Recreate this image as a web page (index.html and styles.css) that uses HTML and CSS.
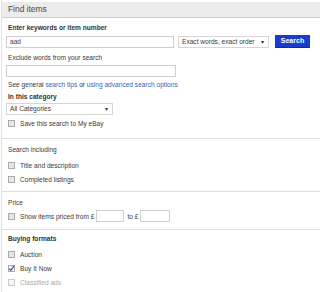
FILE: index.html
```html
<!DOCTYPE html>
<html>
<head>
<meta charset="utf-8">
<link rel="stylesheet" href="styles.css">
</head>
<body>
<div class="panel">
  <div class="head">Find items</div>
  <div class="sec first">
    <div class="lbl bold">Enter keywords or item number</div>
    <div class="row kw">
      <div class="inp wide">aad</div>
      <div class="sel mode">Exact words, exact order<span class="arr">&#9662;</span></div>
      <div class="btn">Search</div>
    </div>
    <div class="lbl">Exclude words from your search</div>
    <div class="inp wide2"></div>
    <div class="links">See general <span class="lnk">search tips</span> or <span class="lnk">using advanced search options</span></div>
    <div class="lbl bold">In this category</div>
    <div class="sel cat">All Categories<span class="arr">&#9662;</span></div>
    <div class="chk"><span class="box"></span>Save this search to My eBay</div>
  </div>
  <div class="sec incl">
    <div class="lbl">Search including</div>
    <div class="chk"><span class="box"></span>Title and description</div>
    <div class="chk"><span class="box"></span>Completed listings</div>
  </div>
  <div class="sec pricesec">
    <div class="lbl">Price</div>
    <div class="chk price"><span class="box"></span>Show items priced from £ <span class="inp small"></span> to £ <span class="inp small2"></span></div>
  </div>
  <div class="sec last">
    <div class="lbl bold">Buying formats</div>
    <div class="chk"><span class="box"></span>Auction</div>
    <div class="chk"><span class="box on"><svg width="7" height="7" viewBox="0 0 7 7"><path d="M1.2 3.6 L2.8 5.3 L5.9 1.2" fill="none" stroke="#2a4f8f" stroke-width="1.2"/></svg></span>Buy It Now</div>
    <div class="chk dis"><span class="box"></span>Classified ads</div>
  </div>
</div>
</body>
</html>
```
FILE: styles.css
```css
html, body { margin: 0; padding: 0; background: #fff; }
body {
  font-family: "Liberation Sans", Arial, sans-serif;
  font-size: 6.6px;
  color: #3a3a3a;
  width: 320px;
  height: 292px;
  overflow: hidden;
}
.panel {
  border-left: 1px solid #e2e2e2;
  margin-left: 1px;
  padding-top: 2px;
  height: 290px;
}
.head {
  height: 15px;
  line-height: 15px;
  background: #ececec;
  border-bottom: 1px solid #cfcfcf;
  font-size: 8.4px;
  color: #444;
  padding-left: 6px;
}
.sec {
  padding: 0 0 0 4px;
  border-bottom: 1px solid #dedede;
}
.sec.first { padding-top: 4px; padding-bottom: 8px; }
.sec.incl { padding-bottom: 5px; }
.sec.pricesec { padding-bottom: 6px; }
.sec.last { border-bottom: none; }
.lbl { line-height: 12px; height: 12px; padding-left: 2px; }
.bold { font-weight: bold; color: #333; }
.row { display: flex; align-items: center; }
.kw { margin-top: 1px; margin-bottom: 4px; }
.inp {
  box-sizing: border-box;
  border: 1px solid #cfcfcf;
  background: #fff;
  height: 12px;
  line-height: 10px;
  padding-left: 3px;
}
.wide { width: 168px; }
.wide2 { width: 170px; margin-top: 1px; }
.sel {
  box-sizing: border-box;
  border: 1px solid #d6d6d6;
  height: 12px;
  line-height: 10px;
  padding-left: 3px;
  position: relative;
  background: #fff;
}
.arr { position: absolute; right: 4px; top: 0; font-size: 6px; color: #333; }
.mode { width: 91px; margin-left: 4px; }
.btn {
  margin-left: 6px;
  width: 35px;
  height: 12px;
  line-height: 12px;
  background: #1a3ccc;
  border-bottom: 1px solid #0d2a9a;
  color: #fff;
  font-weight: bold;
  font-size: 7px;
  text-align: center;
}
.links { line-height: 12px; margin-top: 2px; padding-left: 2px; }
.lnk { color: #3a5fb6; }
.cat { width: 107px; }
.chk { display: flex; align-items: center; height: 14px; padding-left: 2px; }
.box {
  box-sizing: border-box;
  width: 7px;
  height: 7px;
  border: 1px solid #aaa;
  background: #e6e6e6;
  margin-right: 5px;
  display: inline-block;
  position: relative;
}
.box svg { position: absolute; left: -1px; top: -1px; }
.box.on { background: #f2f2f2; }
.dis { color: #aaa; }
.dis .box { border-color: #ccc; background: #f4f4f4; }
.sec.first .chk { margin-top: 1px; }
.sec .lbl:first-child { margin-top: 5px; }
.sec.first .lbl:first-child { margin-top: 0; }
.sec.last .lbl:first-child { margin-top: 3px; }
.sec .lbl + .chk { margin-top: 2px; }
.sec .lbl + .chk.price { margin-top: 0; }
.small { display: inline-block; width: 28px; margin: 0 3px 0 2px; }
.small2 { display: inline-block; width: 30px; margin-left: 2px; }
```
